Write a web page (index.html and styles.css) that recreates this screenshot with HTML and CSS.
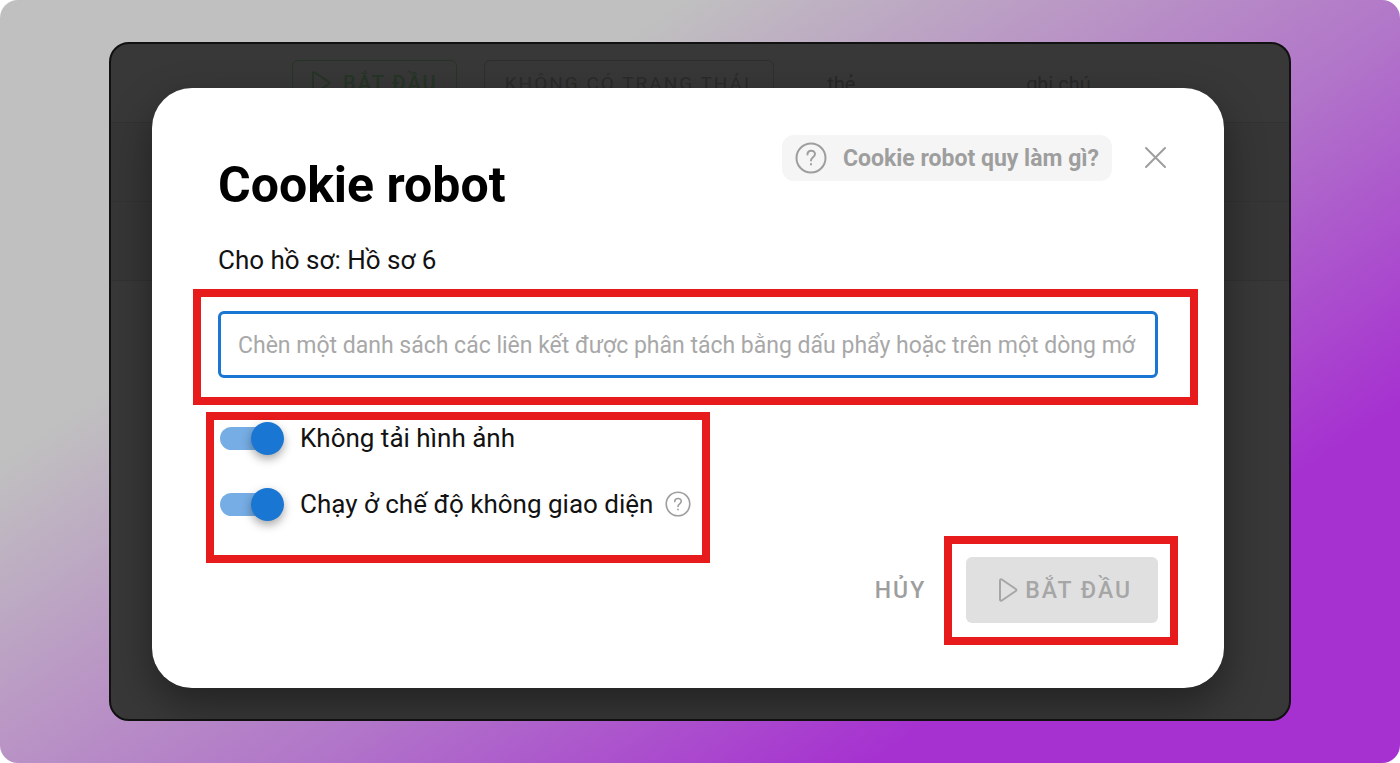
FILE: index.html
```html
<!DOCTYPE html>
<html lang="vi">
<head>
    <meta charset="UTF-8">
    <meta name="viewport" content="width=device-width, initial-scale=1">
    <title>Cookie robot</title>
    <link rel="stylesheet" href="styles.css">
</head>
<body>
<main class="backdrop">
    <div class="window">
        <!-- profile list behind the dialog -->
        <div class="profiles" inert>
            <div class="profile-row">
                <button type="button" class="outlined start">
                    <svg class="play" viewBox="0 0 20 26"><path d="M2 3.500v19c0 1 1 1.500 1.800 1l14-9.500c.8-.5.8-1.500 0-2L3.800 2.500C3 2 2 2.500 2 3.500z"/></svg>
                    BẮT ĐẦU
                </button>
                <button type="button" class="outlined status">KHÔNG CÓ TRẠNG THÁI</button>
                <span class="tag">thẻ</span>
                <span class="note">ghi chú</span>
            </div>
            <div class="profile-row"></div>
            <div class="profile-row"></div>
        </div>

        <form class="dialog" role="dialog" aria-labelledby="title">
            <header class="dialog-head">
                <h1 id="title">Cookie robot</h1>
                <div class="head-tools">
                    <a href="#" class="help">
                        <svg class="help-icon" viewBox="0 0 32 32">
                            <circle cx="16" cy="16" r="14.500"/>
                            <path d="M12.500 12.500c0-5 7.500-5 7.500-.5 0 3.500-4 3-4 6.500"/>
                            <path d="M16 22v.5"/>
                        </svg>
                        Cookie robot quy làm gì?
                    </a>
                    <button type="button" class="close" aria-label="Đóng">
                        <svg viewBox="0 0 32 32"><path d="M6 6l19 19M25 6L6 25"/></svg>
                    </button>
                </div>
            </header>
            <p class="profile-name">Cho hồ sơ: Hồ sơ 6</p>

            <div class="mark links">
                <input type="text" class="links-input" aria-label="Danh sách các liên kết" placeholder="Chèn một danh sách các liên kết được phân tách bằng dấu phẩy hoặc trên một dòng mớ">
            </div>

            <div class="dialog-bottom">
                <div class="mark options">
                    <div class="option">
                        <input type="checkbox" class="switch" id="images" checked>
                        <label for="images">Không tải hình ảnh</label>
                    </div>
                    <div class="option">
                        <input type="checkbox" class="switch" id="headless" checked>
                        <label for="headless">Chạy ở chế độ không giao diện</label>
                        <svg class="hint" viewBox="0 0 32 32">
                            <circle cx="16" cy="16" r="14.500"/>
                            <path d="M12 13c0-5 8-5 8-.5 0 3.500-4 3-4 6.500"/>
                            <path d="M16 22.500v.5"/>
                        </svg>
                    </div>
                </div>
                <div class="actions">
                    <button type="button" class="cancel">HỦY</button>
                    <div class="mark submit">
                        <button type="submit" class="run" disabled>
                            <svg class="play" viewBox="0 0 20 26"><path d="M2 3.500v19c0 1 1 1.500 1.800 1l14-9.500c.8-.5.8-1.500 0-2L3.800 2.500C3 2 2 2.500 2 3.500z"/></svg>
                            BẮT ĐẦU
                        </button>
                    </div>
                </div>
            </div>
        </form>
    </div>
</main>
</body>
</html>
```

FILE: styles.css
```css
*{
    box-sizing: border-box;
}
body{
    margin: 0;
    background-color: white;
    font-family: Roboto, "Liberation Sans", sans-serif;
    color: #121212;
}
button, input{
    font-family: inherit;
}
svg{
    fill: none;
    stroke: currentColor;
    stroke-linecap: round;
    stroke-linejoin: round;
    flex: none;
}
.backdrop{
    min-height: 100vh;
    padding: 42px 109px;
    border-radius: 18px;
    background: linear-gradient(146deg, #c0c0c0 27%, #b994c5 44%, #b175c9 57%, #a631d0 79%);
}
.window{
    position: relative;
    overflow: hidden;
    padding: 44px 65px 31px 41px;
    border: 2px solid #111;
    border-radius: 20px;
    background-color: #383838;
}

/* list behind */
.profiles{
    position: absolute;
    inset: 0;
}
.profile-row{
    display: flex;
    align-items: flex-start;
    height: 79px;
    padding: 16px 0 0 181px;
    border-bottom: 1px solid #323232;
    font-size: 20px;
    color: #282828;
}
.profile-row:nth-child(n+2){
    background-color: #363636;
}
.outlined{
    display: flex;
    align-items: center;
    gap: 12px;
    height: 46px;
    margin-right: 27px;
    padding: 0 18px;
    border: 1px solid #2f2f2f;
    border-radius: 6px;
    background: none;
    font-size: 20px;
    letter-spacing: 2px;
    white-space: nowrap;
    color: #2b2b2b;
}
.start{
    border-color: #273527;
    font-weight: 500;
    color: #263526;
}
.status{
    padding: 0 22px 0 20px;
    font-size: 19px;
}
.tag{
    width: 225px;
    padding: 12px 0 0 26px;
}
.note{
    padding-top: 12px;
}
.play{
    width: 20px;
    height: 26px;
    stroke-width: 2;
}

/* dialog */
.dialog{
    position: relative;
    padding: 47px 0 43px;
    border-radius: 40px;
    background-color: white;
    box-shadow: 0 16px 40px rgba(0,0,0,0.4);
}
.dialog-head{
    display: flex;
    justify-content: space-between;
    align-items: flex-start;
    padding: 0 52px 0 66px;
}
h1{
    margin: 22px 0 0;
    font-size: 50px;
    line-height: 56px;
    font-weight: 700;
    color: black;
}
.head-tools{
    display: flex;
    align-items: center;
    gap: 28px;
}
.help{
    display: flex;
    align-items: center;
    gap: 16px;
    height: 46px;
    padding: 0 13px;
    border-radius: 12px;
    background-color: #f5f5f5;
    font-size: 23px;
    font-weight: 700;
    text-decoration: none;
    color: #9e9e9e;
}
.help-icon{
    width: 32px;
    height: 32px;
    stroke-width: 2;
}
.close{
    width: 32px;
    height: 32px;
    padding: 0;
    border: none;
    background: none;
    color: #9e9e9e;
}
.close svg{
    display: block;
    stroke-width: 2;
}
.profile-name{
    margin: 31px 66px 13px;
    font-size: 26px;
    line-height: 32px;
}
.mark{
    border: 8px solid #e71b1b;
}
.links{
    margin: 0 26px 7px 41px;
    padding: 14px 32px 19px 17px;
}
.links-input{
    display: block;
    width: 100%;
    height: 67px;
    padding: 2px 17px 0;
    border: 3px solid #1976d2;
    border-radius: 6px;
    outline: none;
    font-size: 23px;
    color: #121212;
}
.links-input::placeholder{
    color: #a8a8a8;
}
.dialog-bottom{
    display: flex;
    justify-content: space-between;
    align-items: flex-start;
    padding: 0 46px 0 54px;
}
.options{
    display: flex;
    flex-direction: column;
    gap: 30px;
    padding: 0 11px 33px 6px;
}
.option{
    display: flex;
    align-items: center;
    height: 36px;
    font-size: 26px;
}
.switch{
    appearance: none;
    position: relative;
    width: 60px;
    height: 23px;
    margin: 0 20px 0 0;
    border-radius: 12px;
    background-color: #76ade4;
}
.switch::before{
    content: "";
    position: absolute;
    top: -5px;
    right: -4px;
    width: 33px;
    height: 33px;
    border-radius: 50%;
    background-color: #1976d2;
    box-shadow: 0 4px 10px rgba(0,0,0,0.35);
}
.hint{
    width: 26px;
    height: 26px;
    margin-left: 12px;
    stroke-width: 2;
    color: #9e9e9e;
}
.actions{
    display: flex;
    align-items: center;
    gap: 18px;
    margin-top: 124px;
}
.cancel{
    padding: 0;
    border: none;
    background: none;
    font-size: 23px;
    font-weight: 500;
    letter-spacing: 2px;
    color: #9e9e9e;
}
.submit{
    padding: 13px 12px 14px 14px;
}
.run{
    display: flex;
    align-items: center;
    gap: 7px;
    height: 66px;
    padding: 0 26px 0 32px;
    border: none;
    border-radius: 6px;
    background-color: #e0e0e0;
    font-size: 23px;
    font-weight: 500;
    letter-spacing: 2px;
    white-space: nowrap;
    color: #a6a6a6;
}
```
